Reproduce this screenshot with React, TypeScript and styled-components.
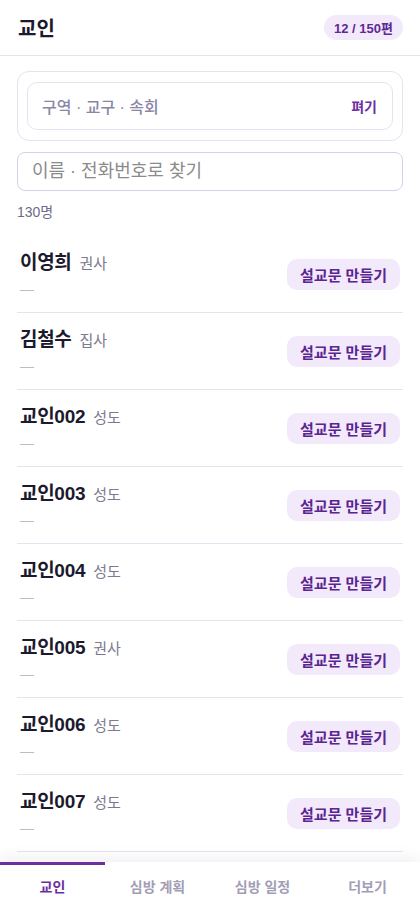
import React from "react";
import styled, { createGlobalStyle } from "styled-components";

const Global = createGlobalStyle`
  html, body { margin: 0; padding: 0; background: #ffffff; }
  body {
    font-family: "Liberation Sans", "Noto Sans CJK KR", sans-serif;
    color: #1c1a2e;
    overflow: hidden;
  }
  * { box-sizing: border-box; }
`;

const Page = styled.div`
  width: 420px;
  height: 909px;
  display: flex;
  flex-direction: column;
  overflow: hidden;
`;

const Header = styled.header`
  flex: none;
  height: 56px;
  padding: 0 17px 0 18px;
  display: flex;
  align-items: center;
  justify-content: space-between;
  border-bottom: 1px solid #e6e2ef;
`;

const Title = styled.h1`
  margin: 0;
  font-size: 20px;
  font-weight: 700;
  color: #1c1a2e;
`;

const Badge = styled.span`
  height: 25px;
  padding: 0 10px;
  border-radius: 13px;
  background: #f2e9fb;
  color: #5f2a97;
  font-size: 13px;
  font-weight: 700;
  display: inline-flex;
  align-items: center;
`;

const Content = styled.main`
  flex: 1;
  min-height: 0;
  overflow: hidden;
  padding: 15px 17px 0;
  display: flex;
  flex-direction: column;
`;

const FilterCard = styled.div`
  flex: none;
  border: 1px solid #e6e2f0;
  border-radius: 12px;
  padding: 10px 9px;
`;

const FilterRow = styled.div`
  height: 48px;
  border: 1px solid #e6e2f0;
  border-radius: 10px;
  padding: 0 15px 0 14px;
  display: flex;
  align-items: center;
  justify-content: space-between;
`;

const FilterLabel = styled.span`
  font-size: 16px;
  font-weight: 500;
  color: #8a86a6;
`;

const Toggle = styled.span`
  font-size: 14px;
  font-weight: 700;
  color: #6b2fa0;
`;

const Search = styled.input`
  flex: none;
  margin-top: 11px;
  height: 39px;
  width: 100%;
  border: 1.5px solid #d6d0e8;
  border-radius: 8px;
  padding: 0 14px;
  font-family: "Liberation Sans", "Noto Sans CJK KR", sans-serif;
  font-size: 18px;
  color: #1c1a2e;
  outline: none;
  &::placeholder { color: #8b8b8b; }
`;

const Count = styled.div`
  flex: none;
  margin-top: 11px;
  font-size: 14px;
  line-height: 20px;
  color: #6f6b87;
`;

const List = styled.ul`
  list-style: none;
  margin: 14px 0 0;
  padding: 0;
`;

const Row = styled.li`
  height: 77px;
  padding: 0 3px;
  border-bottom: 1px solid #e6e2ef;
  display: flex;
  align-items: center;
  justify-content: space-between;
`;

const Info = styled.div`
  display: flex;
  flex-direction: column;
  margin-top: 2px;
`;

const NameLine = styled.div`
  display: flex;
  align-items: baseline;
  gap: 8px;
  line-height: 24px;
`;

const Name = styled.span`
  font-size: 19px;
  font-weight: 700;
  color: #1c1a2e;
  letter-spacing: -0.3px;
`;

const Role = styled.span`
  font-size: 15px;
  color: #7d7a90;
`;

const Dash = styled.span`
  margin-top: 3px;
  font-size: 14px;
  line-height: 20px;
  color: #bdbacb;
`;

const MakeButton = styled.button`
  height: 31px;
  padding: 0 13px;
  border: none;
  border-radius: 10px;
  background: #f2e9fb;
  color: #5a2590;
  font-family: "Liberation Sans", "Noto Sans CJK KR", sans-serif;
  font-size: 15px;
  font-weight: 700;
`;

const Nav = styled.nav`
  flex: none;
  position: relative;
  z-index: 1;
  height: 47px;
  background: #ffffff;
  box-shadow: 0 -4px 14px rgba(30, 20, 60, 0.07);
  display: grid;
  grid-template-columns: repeat(4, 1fr);
`;

const Tab = styled.div<{ $active?: boolean }>`
  position: relative;
  display: flex;
  align-items: center;
  justify-content: center;
  font-size: 14px;
  font-weight: 700;
  color: ${(p) => (p.$active ? "#6b2fa0" : "#a29eb6")};
  &::before {
    content: "";
    position: absolute;
    top: 0;
    left: 0;
    right: 0;
    height: 3px;
    background: ${(p) => (p.$active ? "#6b2fa0" : "transparent")};
  }
`;

const members = [
  { name: "이영희", role: "권사" },
  { name: "김철수", role: "집사" },
  { name: "교인002", role: "성도" },
  { name: "교인003", role: "성도" },
  { name: "교인004", role: "성도" },
  { name: "교인005", role: "권사" },
  { name: "교인006", role: "성도" },
  { name: "교인007", role: "성도" },
];

export default function App() {
  return (
    <Page>
      <Global />
      <Header>
        <Title>교인</Title>
        <Badge>12 / 150편</Badge>
      </Header>
      <Content>
        <FilterCard>
          <FilterRow>
            <FilterLabel>구역 · 교구 · 속회</FilterLabel>
            <Toggle>펴기</Toggle>
          </FilterRow>
        </FilterCard>
        <Search placeholder="이름 · 전화번호로 찾기" />
        <Count>130명</Count>
        <List>
          {members.map((m) => (
            <Row key={m.name}>
              <Info>
                <NameLine>
                  <Name>{m.name}</Name>
                  <Role>{m.role}</Role>
                </NameLine>
                <Dash>—</Dash>
              </Info>
              <MakeButton>설교문 만들기</MakeButton>
            </Row>
          ))}
        </List>
      </Content>
      <Nav>
        <Tab $active>교인</Tab>
        <Tab>심방 계획</Tab>
        <Tab>심방 일정</Tab>
        <Tab>더보기</Tab>
      </Nav>
    </Page>
  );
}
